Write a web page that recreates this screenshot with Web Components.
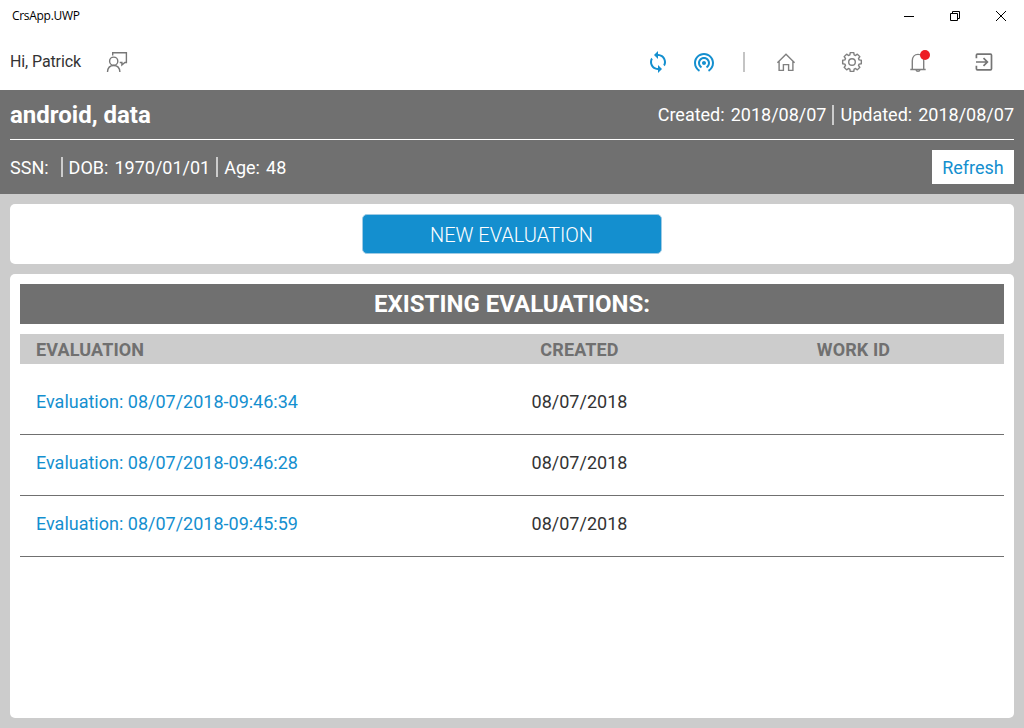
<!DOCTYPE html>
<html lang="en">
<head>
<meta charset="utf-8">
<title>CrsApp.UWP</title>
<style>
html,body{margin:0;height:100%}
body{font-family:Roboto,sans-serif;font-size:18px;color:#333;background:#ccc;overflow:hidden}
</style>
</head>
<body>
<crs-app></crs-app>
<script>
function define(name, html) {
  const t = document.createElement('template');
  t.innerHTML = html;
  customElements.define(name, class extends HTMLElement {
    constructor() {
      super();
      this.attachShadow({mode: 'open'}).appendChild(t.content.cloneNode(true));
    }
  });
}

const ICONS = {
  sync: '<path fill="#148fcf" d="M12 4V1L8 5l4 4V6c3.31 0 6 2.69 6 6 0 1.01-.25 1.97-.7 2.8l1.46 1.46C19.54 15.03 20 13.57 20 12c0-4.42-3.58-8-8-8zm0 14c-3.31 0-6-2.69-6-6 0-1.01.25-1.97.7-2.8L5.24 7.74C4.46 8.97 4 10.43 4 12c0 4.42 3.58 8 8 8v3l4-4-4-4v3z"/>',
  tether: '<path fill="#148fcf" d="M12 11c-1.1 0-2 .9-2 2s.9 2 2 2 2-.9 2-2-.9-2-2-2zm6 2c0-3.31-2.69-6-6-6s-6 2.69-6 6c0 2.22 1.21 4.15 3 5.190l1-1.740c-1.190-.7-2-1.970-2-3.450 0-2.210 1.790-4 4-4s4 1.790 4 4c0 1.480-.810 2.750-2 3.450l1 1.740c1.790-1.040 3-2.970 3-5.190zM12 3C6.480 3 2 7.480 2 13c0 3.700 2.010 6.920 4.990 8.650l1-1.730C5.610 18.530 4 15.960 4 13c0-4.420 3.580-8 8-8s8 3.580 8 8c0 2.960-1.610 5.530-4 6.920l1 1.730c2.990-1.730 5-4.950 5-8.650 0-5.520-4.480-10-10-10z"/>',
  home: '<path fill="none" stroke="#808080" stroke-width="1.4" d="M3.4 12.700 12 4.300l8.600 8.400M5.100 11.200v9.200h4.300v-5.800h5.200v5.800h4.300v-9.200"/>',
  bell: '<path fill="none" stroke="#808080" stroke-width="1.4" d="M4.300 19.500h15.400M6.300 19.300V10.700C6.300 7 8.600 4.400 12 4.400s5.700 2.600 5.700 6.300v8.600M10 19.800c.2 1 .9 1.500 2 1.500s1.800-.5 2-1.500"/>',
  exit: '<path fill="none" stroke="#757575" stroke-width="1.700" stroke-linejoin="round" d="M4.400 8.300V5.200c0-.6.400-1 1-1h13.100c.6 0 1 .4 1 1v13.600c0 .6-.4 1-1 1H5.400c-.6 0-1-.4-1-1v-3.100"/><path fill="none" stroke="#757575" stroke-width="1.700" d="M4 12h11.200M11.500 8.100l3.900 3.900-3.900 3.900"/>',
  person: '<g fill="none" stroke="#777" stroke-width="1.400"><path d="M7.700 5.500V2.800h13.700v9.700h-1.500l-3 2.500v-2.500h-2.200"/><circle cx="8.700" cy="11.200" r="4.100"/><path d="M2.500 22c.2-3.900 2.500-6.500 6.200-6.500s6 2.600 6.200 6.500"/></g>'
};
{
  const pts = [];
  for (let i = 0; i < 8; i++) {
    for (const [o, r] of [[-.29, 7.4], [-.19, 9.500], [.19, 9.500], [.29, 7.4]]) {
      const a = i * Math.PI / 4 + o;
      pts.push((12 + r * Math.cos(a)).toFixed(2) + ' ' + (12 + r * Math.sin(a)).toFixed(2));
    }
  }
  ICONS.gear = `<g fill="none" stroke="#808080" stroke-width="1.400" stroke-linejoin="round"><path d="M${pts.join('L')}Z"/><circle cx="12" cy="12" r="3.300"/></g>`;
}
customElements.define('crs-icon', class extends HTMLElement {
  constructor() { super(); this.attachShadow({mode: 'open'}); }
  connectedCallback() {
    this.shadowRoot.innerHTML = `<style>:host{display:block;width:24px;height:24px;flex:none}svg{display:block}</style>
    <svg width="24" height="24" viewBox="0 0 24 24">${ICONS[this.getAttribute('name')]}</svg>`;
  }
});

define('window-bar', `<style>
:host{display:flex;height:32px;align-items:center;background:#fff;color:#000;font:12px/16px "Open Sans",sans-serif}
span{flex:1;padding-left:12px;letter-spacing:-.3px}
svg{display:block;width:46px;height:32px}
path{fill:none;stroke:#000;stroke-width:1}
</style>
<span><slot></slot></span>
<svg><path d="M18 16.500h10"/></svg>
<svg><path d="M18.500 13.500h7v7h-7zM20.500 13.500v-2h7v7h-2"/></svg>
<svg><path d="M18 11l10 10M28 11l-10 10"/></svg>`);

define('tool-bar', `<style>
:host{display:flex;height:58px;align-items:center;background:#fff;padding:2px 28px 0 10px;box-sizing:border-box;font-size:16px;color:#333}
.who{flex:1;display:flex;align-items:center;gap:24px}
.who span{line-height:20px;letter-spacing:-.11px}
.blue,.gray{display:flex;align-items:center}
.blue{gap:22px}.gray{gap:42px}
i{width:2px;height:20px;background:#c4c4c4;margin:0 29px 0 27px}
.bell{position:relative}
.bell b{position:absolute;left:14px;top:0;width:10px;height:10px;border-radius:50%;background:#ed1c24}
</style>
<div class="who"><span><slot></slot></span><crs-icon name="person"></crs-icon></div>
<div class="blue"><crs-icon name="sync"></crs-icon><crs-icon name="tether"></crs-icon></div>
<i></i>
<div class="gray"><crs-icon name="home"></crs-icon><crs-icon name="gear"></crs-icon><div class="bell"><crs-icon name="bell"></crs-icon><b></b></div><crs-icon name="exit"></crs-icon></div>`);

define('patient-header', `<style>
:host{display:block;height:104px;background:#707070;color:#fff;padding:0 10px;box-sizing:border-box}
.row{display:flex;align-items:center;height:49px}
.row+.row{border-top:1px solid #fff;height:54px}
h1{margin:0;flex:1;font-size:24px;font-weight:700;line-height:28px}
.facts{display:flex;align-items:center;line-height:22px;white-space:pre;word-spacing:1.6px}
.two .facts{flex:1}
.two ::slotted(span){display:block;padding-top:1px}
i{width:2px;height:20px;background:#ccc;margin:0 6px}
button{border:0;background:#fff;color:#148fcf;font:18px/22px Roboto,sans-serif;width:82px;height:34px;padding:0}
</style>
<div class="row one"><h1><slot name="name"></slot></h1><div class="facts"><slot name="created"></slot><i></i><slot name="updated"></slot></div></div>
<div class="row two"><div class="facts"><slot name="ssn"></slot><i style="margin-left:12px"></i><slot name="dob"></slot><i></i><slot name="age"></slot></div><button><slot name="action"></slot></button></div>`);

define('crs-card', `<style>
:host{display:block;background:#fff;border-radius:5px;padding:10px;box-sizing:border-box}
</style><slot></slot>`);

define('primary-button', `<style>
:host{display:block;width:300px;margin:0 auto}
button{display:block;width:300px;height:40px;border:1px solid #9fcbe4;border-radius:5px;background:#148fcf;color:#fff;font:300 20px/38px Roboto,sans-serif;padding:1px 1px 0 0}
</style><button><slot></slot></button>`);

define('section-title', `<style>
:host{display:block;height:40px;background:#707070;color:#fff;font-size:24px;font-weight:700;line-height:40px;text-align:center;margin-bottom:10px}
</style><slot></slot>`);

const GRID = 'display:grid;grid-template-columns:407px 273px 275px;padding-left:16px;align-items:center;box-sizing:border-box;';
define('table-head', `<style>
:host{${GRID}height:30px;background:#ccc;color:#707070;font-weight:700;line-height:28px;padding-top:2px;letter-spacing:.12px;margin-bottom:10px}
::slotted(:not(:first-child)){text-align:center}
</style><slot></slot>`);
define('evaluation-row', `<style>
:host{${GRID}height:61px;border-bottom:1px solid #707070;line-height:24px;padding-bottom:5px}
a{color:#148fcf}
span{text-align:center}
</style><a><slot name="title"></slot></a><span><slot name="date"></slot></span>`);

define('crs-app', `<style>
:host{display:flex;flex-direction:column;height:728px;width:1024px}
main{flex:1;display:flex;flex-direction:column;gap:10px;padding:10px;background:#ccc;box-sizing:border-box}
.new{height:60px}
.list{flex:1}
</style>
<window-bar>CrsApp.UWP</window-bar>
<tool-bar>Hi, Patrick</tool-bar>
<patient-header>
<span slot="name">android, data</span>
<span slot="created">Created: 2018/08/07</span><span slot="updated">Updated: 2018/08/07</span>
<span slot="ssn">SSN:</span><span slot="dob">DOB: 1970/01/01</span><span slot="age">Age: 48</span>
<span slot="action">Refresh</span>
</patient-header>
<main>
<crs-card class="new"><primary-button>NEW EVALUATION</primary-button></crs-card>
<crs-card class="list">
<section-title>EXISTING EVALUATIONS:</section-title>
<table-head><span>EVALUATION</span><span>CREATED</span><span>WORK ID</span></table-head>
<evaluation-row><span slot="title">Evaluation: 08/07/2018-09:46:34</span><span slot="date">08/07/2018</span></evaluation-row>
<evaluation-row><span slot="title">Evaluation: 08/07/2018-09:46:28</span><span slot="date">08/07/2018</span></evaluation-row>
<evaluation-row><span slot="title">Evaluation: 08/07/2018-09:45:59</span><span slot="date">08/07/2018</span></evaluation-row>
</crs-card>
</main>`);
</script>
</body>
</html>
